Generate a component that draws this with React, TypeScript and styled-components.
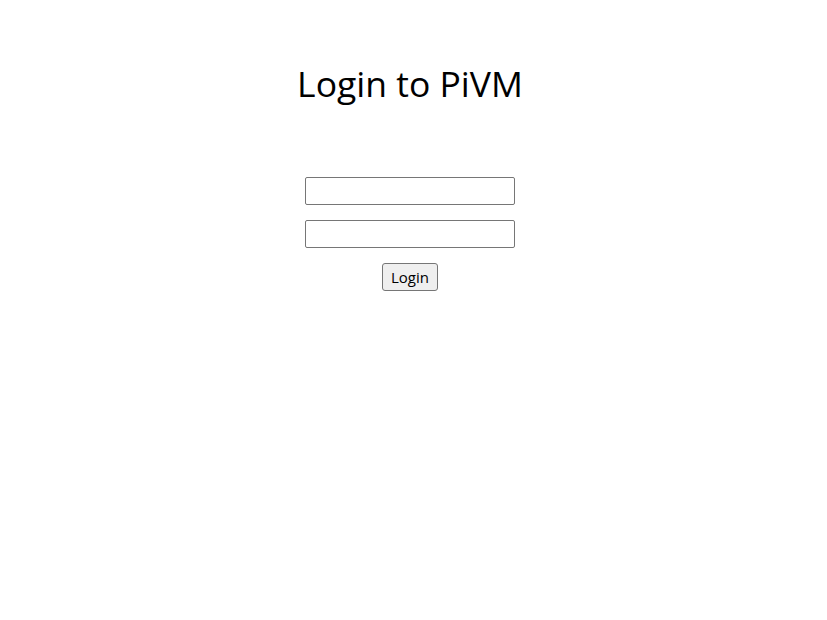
import React from 'react';
import styled, { createGlobalStyle } from 'styled-components';

const GlobalStyle = createGlobalStyle`
  body {
    margin: 0;
    background: #ffffff;
    font-family: "Open Sans", "Noto Sans", sans-serif;
    color: #000000;
  }
`;

const Page = styled.main`
  display: flex;
  flex-direction: column;
  align-items: center;
  padding: 60px 7px 0 0;
`;

const Title = styled.h1`
  margin: 0;
  font-size: 35.5px;
  font-weight: 400;
  line-height: 46px;
`;

const Form = styled.form`
  display: flex;
  flex-direction: column;
  align-items: center;
  gap: 15px;
  margin-top: 71px;
`;

const Field = styled.input`
  box-sizing: border-box;
  width: 210px;
  height: 28px;
  border: 1px solid #767676;
  border-radius: 2px;
  padding: 1px 4px;
  font-family: inherit;
  font-size: 15px;
`;

const Button = styled.button`
  box-sizing: border-box;
  width: 56px;
  height: 28px;
  padding: 0;
  background: #efefef;
  border: 1px solid #767676;
  border-radius: 3px;
  font-family: inherit;
  font-size: 15px;
  color: #000;
`;

export default function App() {
  return (
    <>
      <GlobalStyle />
      <Page>
        <Title>Login to PiVM</Title>
        <Form onSubmit={(e) => e.preventDefault()}>
          <Field type="text" name="username" />
          <Field type="password" name="password" />
          <Button type="submit">Login</Button>
        </Form>
      </Page>
    </>
  );
}
